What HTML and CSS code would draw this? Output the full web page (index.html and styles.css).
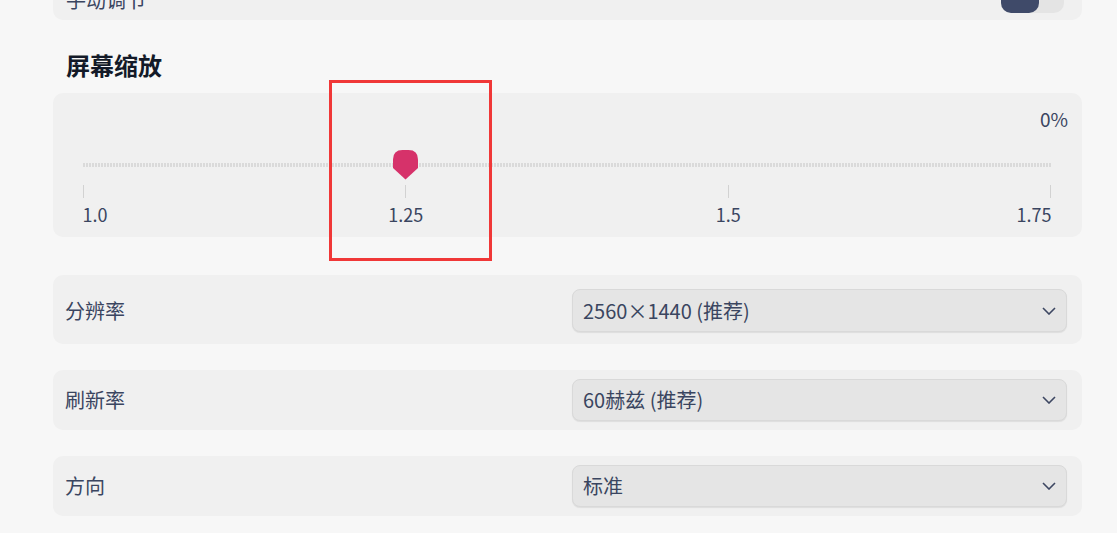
FILE: index.html
```html
<!DOCTYPE html>
<html lang="zh-CN">
<head>
<meta charset="utf-8">
<title>显示设置</title>
<link rel="stylesheet" href="styles.css">
</head>
<body>
<div class="page">
  <div class="card card--top">
    <span class="label">手动调节</span>
    <span class="toggle"><span class="toggle-knob"></span></span>
  </div>

  <h2 class="section-title">屏幕缩放</h2>

  <div class="card card--slider">
    <div class="pct">0%</div>
    <div class="slider">
      <div class="track">
        <svg class="thumb" style="left: calc(33.333% - 12.5px)" width="25" height="30" viewBox="0 0 25 30">
          <path d="M0 9.5 Q0 0 9.5 0 H15.5 Q25 0 25 9.5 V18 L12.5 29.5 L0 18 Z" fill="#d6326a"/>
        </svg>
      </div>
      <div class="ticks">
        <span class="tick"></span><span class="tick"></span><span class="tick"></span><span class="tick"></span>
      </div>
      <div class="tick-labels">
        <span class="tick-label tick-label--start"><span>1.0</span></span>
        <span class="tick-label"><span>1.25</span></span>
        <span class="tick-label"><span>1.5</span></span>
        <span class="tick-label tick-label--end"><span>1.75</span></span>
      </div>
    </div>
    <div class="highlight"></div>
  </div>

  <div class="card row row--first">
    <span class="label">分辨率</span>
    <div class="select select--tall">
      <span>2560×1440 (推荐)</span>
      <svg class="chevron" width="14" height="8" viewBox="0 0 14 8"><path d="M1 1 L7 7 L13 1" fill="none" stroke="#3d4762" stroke-width="1.6"/></svg>
    </div>
  </div>

  <div class="card row">
    <span class="label">刷新率</span>
    <div class="select">
      <span>60赫兹 (推荐)</span>
      <svg class="chevron" width="14" height="8" viewBox="0 0 14 8"><path d="M1 1 L7 7 L13 1" fill="none" stroke="#3d4762" stroke-width="1.6"/></svg>
    </div>
  </div>

  <div class="card row">
    <span class="label">方向</span>
    <div class="select">
      <span>标准</span>
      <svg class="chevron" width="14" height="8" viewBox="0 0 14 8"><path d="M1 1 L7 7 L13 1" fill="none" stroke="#3d4762" stroke-width="1.6"/></svg>
    </div>
  </div>
</div>
</body>
</html>
```

FILE: styles.css
```css
* { box-sizing: border-box; }
html, body { margin: 0; padding: 0; }
body {
  background: #f7f7f7;
  font-family: "Noto Sans CJK SC", "Noto Sans", sans-serif;
  color: #3a4560;
  overflow: hidden;
  height: 533px;
}
.page {
  width: 1029px;
  margin-left: 53px;
  display: flex;
  flex-direction: column;
}
.card {
  background: #f0f0f0;
  border-radius: 10px;
}
.label {
  font-size: 20px;
  line-height: 26px;
  color: #3a4560;
}
.card--top {
  margin-top: -22px;
  height: 42px;
  display: flex;
  align-items: center;
  justify-content: space-between;
  padding: 0 18px 0 13px;
}
.card--top .label { margin-top: 2px; }
.toggle {
  width: 63px;
  height: 28px;
  border-radius: 10px;
  background: #e4e4e4;
  display: flex;
}
.toggle-knob {
  width: 38px;
  height: 28px;
  border-radius: 10px;
  background: #3f4a69;
}
.section-title {
  margin: 30px 0 13px 13px;
  font-size: 24px;
  line-height: 30px;
  font-weight: 700;
  color: #131a28;
}
.card--slider {
  position: relative;
  height: 144px;
  padding: 14px 14px 0 29.5px;
}
.pct {
  font-size: 19px;
  line-height: 24px;
  text-align: right;
}
.slider {
  margin-right: 16.5px;
}
.track {
  position: relative;
  margin-top: 32px;
  height: 4px;
  background: repeating-linear-gradient(90deg, #dadada 0 2px, transparent 2px 3px);
}
.thumb {
  position: absolute;
  top: -13px;
  display: block;
}
.ticks {
  margin-top: 18px;
  height: 13px;
  display: flex;
  justify-content: space-between;
}
.tick {
  width: 1px;
  height: 13px;
  background: #d2d2d2;
}
.tick-labels {
  margin-top: 4px;
  display: flex;
  justify-content: space-between;
  font-size: 18px;
  line-height: 24px;
}
.tick-label {
  width: 1px;
  display: flex;
  justify-content: center;
  white-space: nowrap;
}
.tick-label--start { justify-content: flex-start; }
.tick-label--end { justify-content: flex-end; }
.highlight {
  position: absolute;
  left: 275.5px;
  top: -13px;
  width: 163px;
  height: 181px;
  border: 3px solid #f03737;
  pointer-events: none;
}
.row {
  display: grid;
  grid-template-columns: 1fr 495px;
  align-items: center;
  padding: 9px 15px 9px 12px;
  margin-top: 26px;
}
.row--first {
  margin-top: 38px;
  padding-top: 14px;
  padding-bottom: 12px;
}
.select {
  height: 42px;
  background: #e5e5e5;
  border: 1px solid #d9d9d9;
  border-radius: 8px;
  box-shadow: 0 1px 1px rgba(0, 0, 0, 0.08);
  display: flex;
  align-items: center;
  justify-content: space-between;
  padding: 0 10px 0 10px;
  font-size: 20px;
  line-height: 26px;
  color: #3a4560;
}
.select--tall { height: 43px; }
.chevron { display: block; }
```
